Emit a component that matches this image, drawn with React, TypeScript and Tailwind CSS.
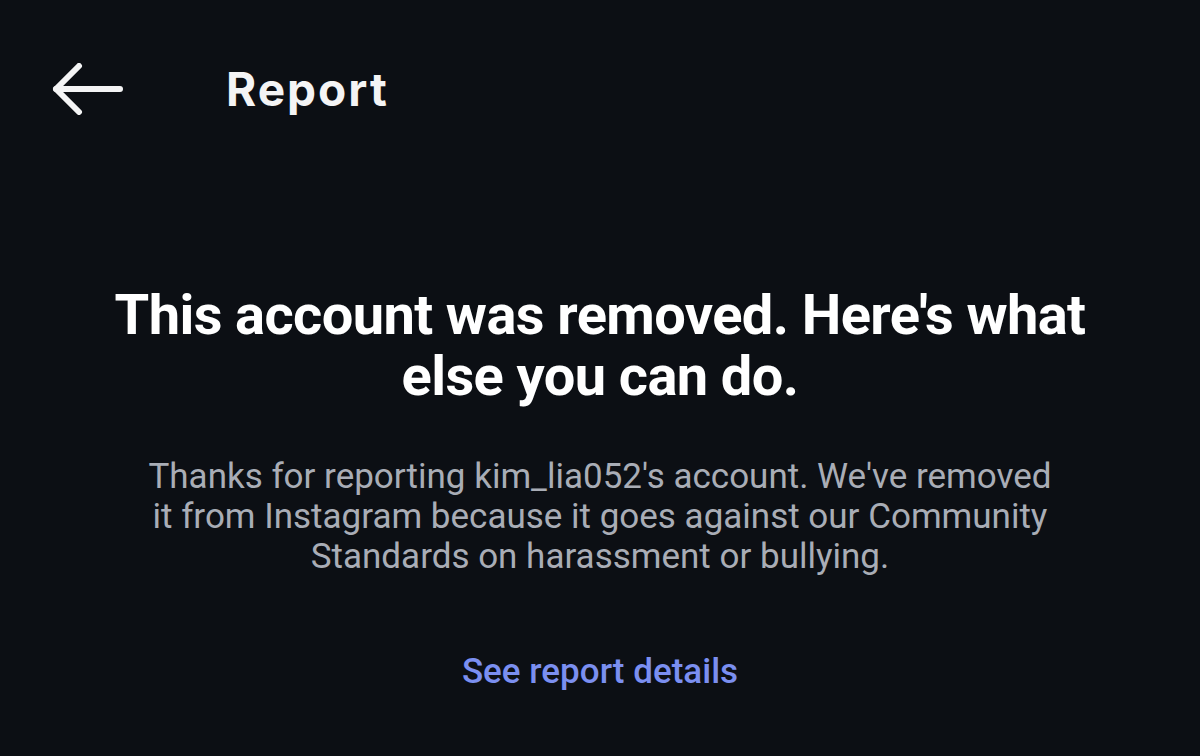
export default function App() {
  return (
    <div className="w-[1200px] h-[756px] bg-[#0c0f14] text-white overflow-hidden" style={{ fontFamily: 'Roboto, "Liberation Sans", sans-serif' }}>
      <header className="flex items-center h-[180px]">
        <button className="ml-[50px] w-[74px] flex items-center -mt-[2px]">
          <svg width="74" height="52" viewBox="0 0 74 52" fill="none" stroke="#f4f4f5" strokeWidth="6" strokeLinecap="round" strokeLinejoin="round">
            <path d="M70 26H6" />
            <path d="M29 3L6 26l23 23" />
          </svg>
        </button>
        <h1 className="ml-[102px] text-[46px] font-bold tracking-[2px] text-[#f4f4f5] -mt-[2px]" style={{ fontFamily: 'Inter, "Liberation Sans", sans-serif' }}>
          Report
        </h1>
      </header>
      <main className="flex flex-col items-center text-center">
        <h2 className="mt-[105px] text-[56px] leading-[61px] font-bold tracking-[-0.6px] text-white">
          This account was removed. Here's what<br />else you can do.
        </h2>
        <p className="mt-[50px] text-[35px] leading-[40px] text-[#a9adb6]">
          Thanks for reporting kim_lia052's account. We've removed<br />
          it from Instagram because it goes against our Community<br />
          Standards on harassment or bullying.
        </p>
        <a className="mt-[75px] text-[35px] leading-[40px] font-medium text-[#7b8ff0]">See report details</a>
      </main>
    </div>
  );
}
